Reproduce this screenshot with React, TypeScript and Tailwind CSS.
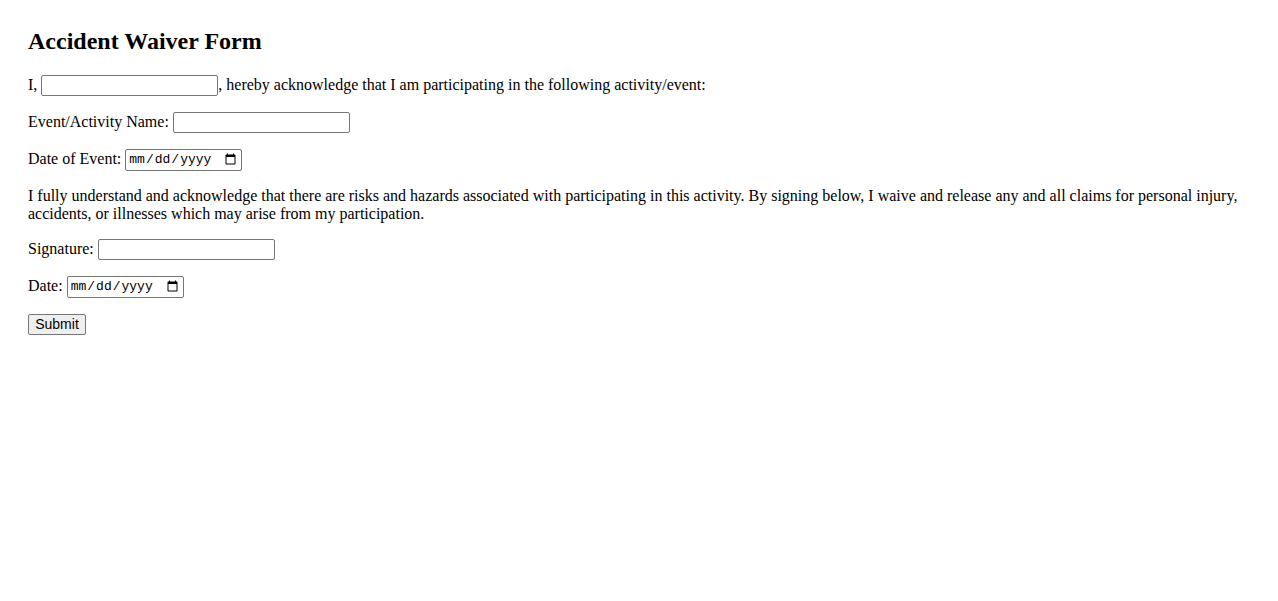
export default function App() {
  const textInput =
    "w-[177px] h-[21px] border border-[#767676] rounded-[2px] px-[2px] py-[1px] bg-white font-['Liberation_Sans',Arial,sans-serif] text-[13.33px] align-baseline";
  const dateInput =
    "w-[117px] h-[22px] border border-[#767676] rounded-[2px] px-[2px] py-[1px] bg-white font-['Liberation_Mono',monospace] text-[13px] text-black align-baseline";

  return (
    <div className="min-h-[601px] bg-white px-[28px] pt-[28px] text-black font-['Liberation_Serif','Times_New_Roman',serif] text-[16px] leading-[normal]">
      <h2 className="text-[24px] font-bold leading-[normal] mb-[19.92px]">Accident Waiver Form</h2>
      <form>
        <p className="mb-4">
          I, <input type="text" className={textInput} />, hereby acknowledge that I am participating in the following activity/event:
        </p>
        <p className="mb-4">
          Event/Activity Name: <input type="text" className={textInput} />
        </p>
        <p className="mb-4">
          Date of Event: <input type="date" className={dateInput} />
        </p>
        <p className="mb-4">
          I fully understand and acknowledge that there are risks and hazards associated with participating in this activity. By signing below, I waive and release any and all claims for personal injury, accidents, or illnesses which may arise from my participation.
        </p>
        <p className="mb-4">
          Signature: <input type="text" className={textInput} />
        </p>
        <p className="mb-4">
          Date: <input type="date" className={dateInput} />
        </p>
        <button
          type="submit"
          className="w-[58px] h-[21px] px-[6px] py-[1px] border border-[#767676] rounded-[2px] bg-[#efefef] font-['Liberation_Sans',Arial,sans-serif] text-[14px] leading-[normal]"
        >
          Submit
        </button>
      </form>
    </div>
  );
}
